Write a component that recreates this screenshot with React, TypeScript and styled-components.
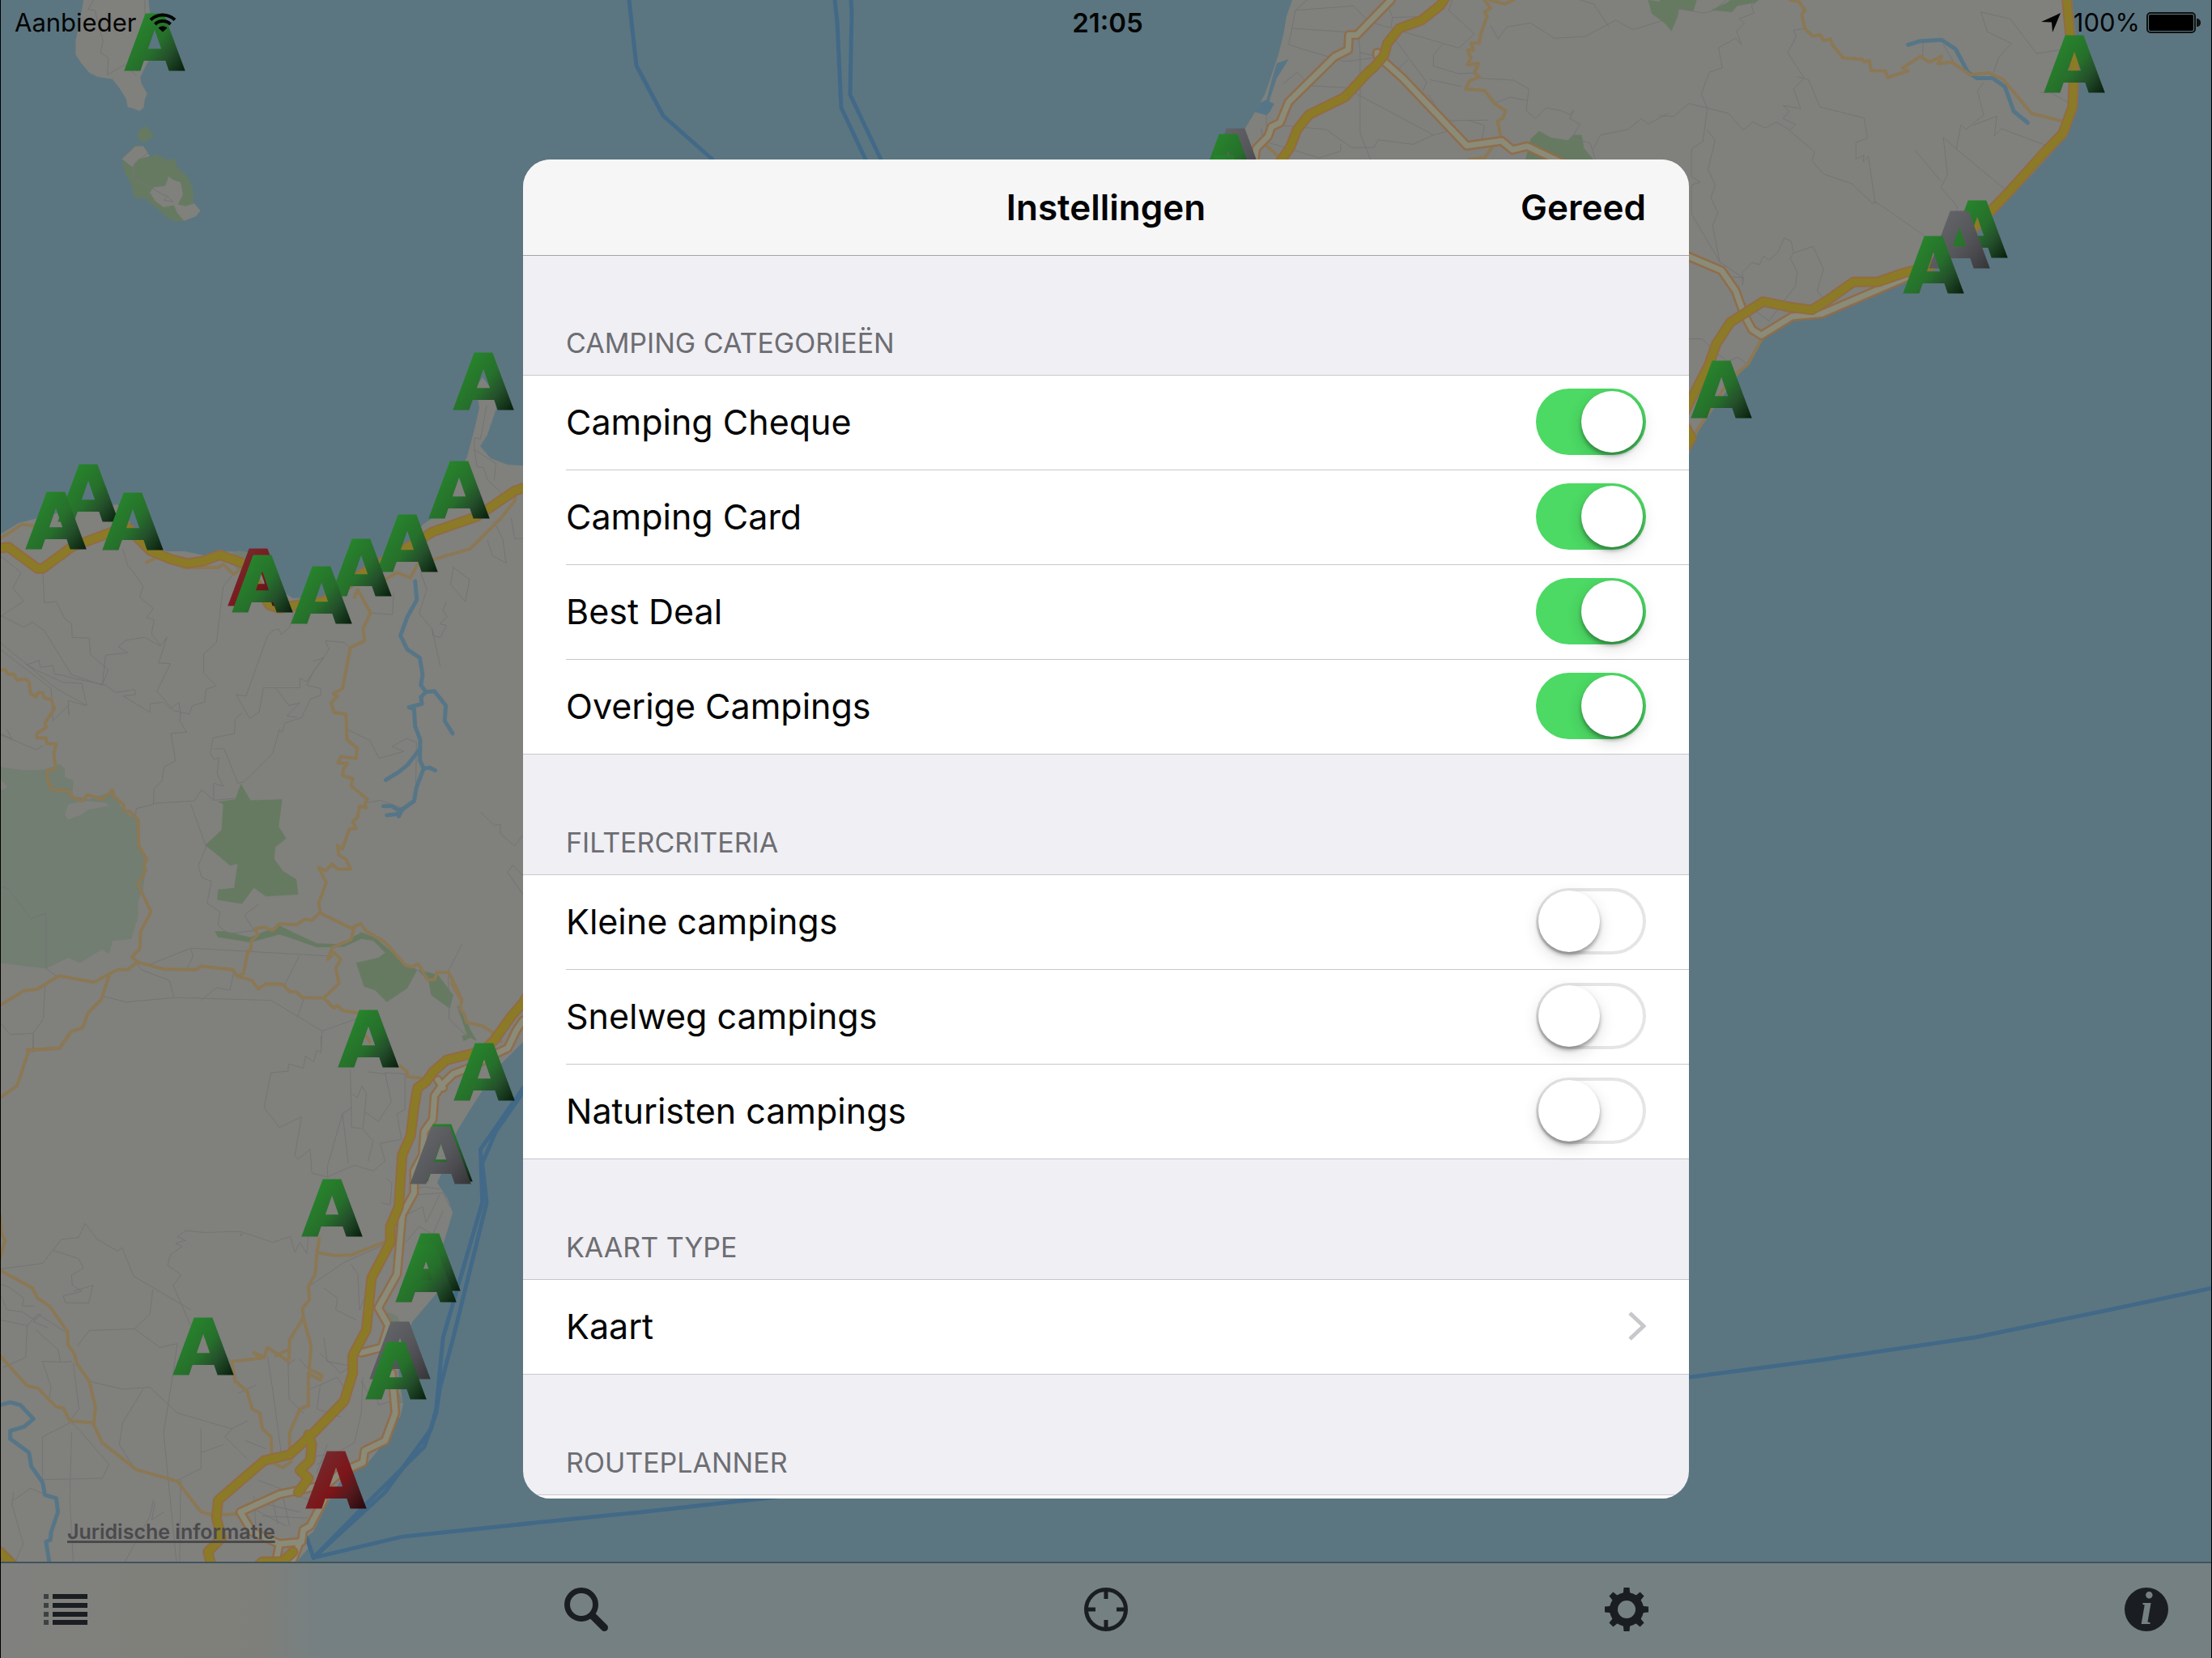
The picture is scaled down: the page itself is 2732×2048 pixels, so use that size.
import React from 'react';
import styled, { createGlobalStyle, css } from 'styled-components';

const GlobalStyle = createGlobalStyle`
  *, *::before, *::after { box-sizing: border-box; }
  html, body { margin: 0; background: #000; }
  body, button, input { font-family: Inter, "Liberation Sans", sans-serif; }
`;

/* ---------- shell ---------- */

const Screen = styled.div`
  position: relative;
  display: flex;
  flex-direction: column;
  height: 100vh;
  padding: 0 1px;
  overflow: hidden;
  background: #000;
`;

const MapArea = styled.main`
  position: relative;
  flex: 1;
  min-height: 0;
  background: #5b7681;
`;

const MapSvg = styled.svg`
  display: block;
  width: 100%;
  height: 100%;
`;

const LegalLink = styled.a`
  position: absolute;
  left: 82px;
  bottom: 21px;
  color: #4a4a4d;
  font-size: 25px;
  font-weight: 600;
  line-height: 32px;
  text-decoration: underline;
  text-decoration-thickness: 3px;
  text-underline-offset: 2px;
  text-decoration-skip-ink: none;
`;

/* ---------- status bar ---------- */

const StatusBar = styled.header`
  position: absolute;
  inset: 0 0 auto;
  display: grid;
  grid-template-columns: 1fr auto 1fr;
  align-items: center;
  height: 56px;
  padding: 0 14px 0 18px;
  color: #050505;
  font-size: 31px;
  line-height: 40px;
`;

const StatusGroup = styled.div<{ $end?: boolean }>`
  display: flex;
  align-items: center;
  justify-content: ${(p) => (p.$end ? 'flex-end' : 'flex-start')};
  gap: 16px;
`;

const BatteryLevel = styled.div`
  display: flex;
  align-items: center;
  gap: 8px;
`;

const Clock = styled.time`
  font-size: 33px;
  font-weight: 600;
`;

/* ---------- toolbar ---------- */

const Toolbar = styled.nav`
  display: flex;
  align-items: center;
  justify-content: space-between;
  height: 119px;
  padding: 0 53px 4px;
  border-top: 2px solid #40545e;
  background: linear-gradient(90deg, #80807e 0, #80807a 220px, #7e7f7a 320px, #758083 400px, #758083 100%);
`;

const ToolButton = styled.button`
  display: block;
  width: 54px;
  height: 54px;
  padding: 0;
  border: 0;
  background: none;
  color: #1a1e22;

  svg {
    display: block;
    width: 100%;
    height: 100%;
  }
`;

/* ---------- dialog ---------- */

const Backdrop = styled.div`
  position: absolute;
  inset: 0;
  display: grid;
  place-items: center;
`;

const Dialog = styled.div`
  width: min(1440px, 94vw);
  height: calc(100vh - 394px);
  overflow: hidden;
  border-radius: 34px;
  background: #efeff4;
`;

const NavBar = styled.div`
  position: relative;
  display: grid;
  grid-template-columns: 1fr auto 1fr;
  align-items: center;
  height: 118px;
  padding: 0 53px;
  background: #f6f6f7;
  box-shadow: 0 1px 0 #a5a5a9;
`;

const Title = styled.h1`
  grid-column: 2;
  margin: 0;
  color: #030303;
  font-size: 44px;
  font-weight: 600;
  line-height: 54px;
`;

const DoneButton = styled.button`
  justify-self: end;
  padding: 0;
  border: 0;
  background: none;
  color: #030303;
  font-size: 44px;
  font-weight: 600;
  line-height: 54px;
`;

const SectionTitle = styled.h2`
  display: flex;
  align-items: flex-end;
  height: 148px;
  margin: 0;
  padding: 0 53px 19px;
  color: #6d6d72;
  font-size: 34px;
  font-weight: 400;
  line-height: 40px;
  text-transform: uppercase;
`;

const List = styled.div`
  border-top: 1px solid #c8c7cc;
  border-bottom: 1px solid #c8c7cc;
  background: #fff;
`;

const rowBox = css`
  display: flex;
  align-items: center;
  justify-content: space-between;
  height: 116px;
  padding: 0 53px 2px 0;
  color: #050505;
  font-size: 43px;
  line-height: 54px;
`;

const ToggleRow = styled.label`
  ${rowBox}
  margin-left: 53px;

  & + & {
    height: 117px;
    border-top: 1px solid #c8c7cc;
  }
`;

const LinkRow = styled.button`
  ${rowBox}
  width: 100%;
  padding-left: 53px;
  border: 0;
  background: none;
  text-align: left;
`;

const Switch = styled.input`
  display: flex;
  align-items: center;
  justify-content: flex-start;
  flex: none;
  appearance: none;
  width: 136px;
  height: 82px;
  margin: 0;
  padding: 0 4px 0 3px;
  border-radius: 41px;
  background: #fff;
  box-shadow: inset 0 0 0 4px #e5e5e5;

  &::after {
    content: '';
    width: 76px;
    height: 76px;
    border-radius: 50%;
    background: #fff;
    box-shadow: 0 4px 5px rgba(0, 0, 0, 0.32), 0 7px 20px rgba(0, 0, 0, 0.14);
  }

  &:checked {
    justify-content: flex-end;
    background: #4cd964;
    box-shadow: none;
  }
`;

const Chevron = styled.svg`
  display: block;
  width: 22px;
  height: 36px;
`;

/* ---------- map drawing ---------- */

type LineKind = 'minor' | 'secondary' | 'river' | 'ferry' | 'paleCase' | 'pale' | 'yellowCase' | 'yellow';

const lineStyles: Record<LineKind, [string, number]> = {
  minor: ['#747475', 1],
  secondary: ['#8b7854', 4],
  river: ['#567687', 5],
  ferry: ['#426987', 5],
  paleCase: ['#8f6d4b', 12],
  pale: ['#8a8b78', 7],
  yellowCase: ['#926b43', 13],
  yellow: ['#8b7b26', 9],
};

const MapLine = styled.polyline<{ $kind: LineKind }>`
  fill: none;
  stroke: ${(p) => lineStyles[p.$kind][0]};
  stroke-width: ${(p) => lineStyles[p.$kind][1]}px;
  stroke-linejoin: round;
  stroke-linecap: round;
  vector-effect: non-scaling-stroke;
`;

const areaColors = { land: '#80807d', park: '#667a62', reserve: '#717e71', sea: '#5b7681', water: '#567687' };
type AreaKind = keyof typeof areaColors;

const MapRegion = styled.polygon<{ $kind: AreaKind }>`
  fill: ${(p) => areaColors[p.$kind]};
`;

interface Tile {
  transform?: string;
  areas?: [AreaKind, string][];
  minor?: string[];
  secondary?: string[];
  river?: string[];
  ferry?: string[];
  pale?: string[];
  yellow?: string[];
}

const tiles: Tile[] = [
  {
    areas: [
      ['land', '0,660 23,646 70,634 145,623 164,650 181,672 206,681 228,681 252,686 274,681 307,682 330,720 362,739 400,737 421,730 442,709 476,703 505,674 522,648 540,636 560,600 577,564 587,526 592,504 588,478 596,466 610,485 613,505 606,525 602,537 593,551 606,566 627,574 700,578 700,1240 646,1287 614,1319 581,1370 564,1398 552,1435 540,1461 553,1481 559,1498 551,1525 540,1560 543,1593 509,1633 497,1662 492,1696 498,1735 494,1751 488,1750 476,1780 455,1806 421,1828 404,1858 387,1892 377,1900 381,1912 366,1930 0,1930'],
      ['land', '1596,0 1589,20 1585,43 1579,67 1568,100 1562,117 1549,140 1537,160 1526,187 1522,197 1522,600 2086,560 2098,532 2115,507 2146,464 2161,448 2176,420 2215,396 2254,391 2311,364 2350,345 2381,336 2433,296 2463,264 2511,214 2550,171 2565,132 2568,89 2563,36 2559,0'],
    ],
    ferry: [
      '777,0 786,81 819,143 880,197',
      '1031,0 1034,27 1039,133 1069,197',
      '1051,0 1052,15 1050,117 1088,197',
      '640,1883 790,1868 960,1849',
      '2080,1702 2248,1680 2439,1652 2600,1619 2732,1591',
    ],
  },
  {
    transform: 'scale(.42092)',
    areas: [
      ['land', '245,0 240,30 230,80 222,120 222,160 238,185 262,213 285,225 330,232 350,258 370,290 375,315 390,318 410,326 422,315 425,290 432,275 415,245 412,225 435,180 440,40 436,0'],
      ['sea', '440,130 450,118 470,140 470,145 440,145'],
      ['park', '427,368 452,398 422,420 405,405 405,385'],
      ['park', '397,425 425,432 440,462 462,452 490,470 512,466 520,490 552,520 567,560 567,600 540,650 505,648 455,608 425,582 395,580 385,540 365,505 358,468'],
      ['land', '397,430 420,428 440,458 405,468 388,490 358,466'],
      ['land', '495,518 508,528 530,535 537,570 522,600 545,605 570,597 588,618 575,635 540,648 520,625 510,602 480,608 455,590 440,565 450,550 485,545'],
    ],
    minor: [
      '275,0 258,28 278,30 302,120 295,155 318,170 315,220 365,190 400,222',
      '425,0 425,45',
      '435,448 395,480 388,520 480,572 490,575 482,588 508,592 490,575',
      '1428,1190 1415,1260 1410,1288 1392,1285 1392,1320 1400,1370 1418,1372 1432,1410 1470,1445',
      '1392,1320 1455,1360 1450,1410',
    ],
  },
  {
    transform: 'translate(0 640) scale(.42092)',
    areas: [
      ['sea', '770,215 780,160 850,220'],
      ['reserve', '665,110 700,95 725,100 725,140 695,150'],
      ['reserve', '0,730 70,740 130,738 175,722 190,735 190,760 215,770 212,815 260,825 325,805 365,860 407,890 407,960 430,1000 420,1090 405,1125 405,1170 385,1235 330,1240 320,1280 300,1265 235,1305 200,1290 135,1322 0,1305'],
      ['land', '200,840 250,830 310,835 320,845 260,855 240,870 200,885 190,870'],
      ['land', '0,765 22,788 10,798 0,795'],
      ['park', '707,780 735,828 828,825 818,905 840,940 808,965 805,1000 830,1035 870,1060 875,1105 780,1110 745,1085 710,1132 637,1120 640,1090 687,1085 697,1015 675,1020 640,990 602,960 650,915 655,840 640,832 690,825'],
      ['park', '630,1212 660,1212 735,1230 820,1195 860,1215 930,1248 1000,1250 1060,1215 1100,1230 1140,1265 1195,1310 1225,1325 1195,1380 1135,1420 1100,1385 1068,1375 1045,1305 1110,1290 1130,1275 1095,1240 1060,1235 1010,1258 930,1260 860,1235 820,1222 735,1245 640,1230'],
      ['park', '1225,1325 1285,1340 1330,1400 1320,1440 1265,1400 1258,1360'],
      ['park', '1340,1430 1355,1440 1380,1500 1400,1535 1380,1525 1360,1535 1355,1520 1370,1515'],
    ],
    minor: [
      '0,110 62,160 38,205 70,243 0,290',
      '125,150 130,248 165,245 190,295 210,310 212,350 262,352 265,400 318,445 300,490 210,460 130,330 95,305 70,320 0,285',
      '0,365 80,430 115,460 165,500 255,550 240,485 185,482 115,450 78,430 115,418 118,438 155,432 160,458 180,460 215,470 310,490 340,512 395,503 398,518 362,522 440,570 440,545 480,540 500,560 525,540 530,575',
      '0,385 150,500 155,595 200,550 202,578 200,535 250,550',
      '300,490 310,402 375,395 348,378 370,358 425,350 470,375 490,350 465,425 500,427 460,508 480,530 510,565 555,575 565,550 600,540 605,502 635,492 598,455 598,398 635,365 655,200 680,170',
      '360,90 375,140 400,170 420,200 410,232 450,265 430,292 452,298 445,340 470,372',
      '530,575 527,595 548,628 502,632 515,712 482,730 475,772 452,795 450,840 400,852 398,870',
      '450,837 570,830 592,797 627,828 690,822',
      '710,572 690,590 688,632 625,645 617,690 630,710 642,702 637,750 655,787 627,778 627,828',
      '628,677 658,677 698,778 715,775 800,690 820,620 828,630 835,602 885,585 912,530 942,520 940,500 900,490 920,450 950,410 920,420',
      '800,330 785,345 722,522 693,518 732,587 760,570 773,498 880,498 880,470 900,480 965,385 955,360 1010,365 1025,380',
      '810,500 848,550 880,542 842,580 870,585',
      '800,330 818,325 825,342 850,320 862,275',
      '560,840 605,965 582,1020 592,1055 620,1065 608,1130 645,1155 640,1195 670,1220 745,1210 717,1165 760,1132',
      '440,1310 560,1262 965,1285', '560,1265 567,1285 550,1320', '878,1285 835,1370',
      '302,1403 370,1420 515,1407 795,1415 945,1505 1045,1470', '590,1415 635,1378 675,1385 685,1335', '892,1410 872,1465',
      '400,1305 415,1325 497,1357 510,1405', '132,1372 127,1470 97,1512 97,1568', '0,1480 30,1515 97,1512',
      '0,1080 25,1088 90,1175 135,1160 135,1322 165,1343', '0,635 108,680 125,668', '20,620 35,648 0,632',
      '1235,160 1252,210 1230,280 1268,325 1292,435', '1268,325 1270,345 1292,350 1310,315 1290,310 1312,290 1300,270 1310,245',
      '1330,145 1378,180 1365,245 1322,195 1330,145', '1085,278 1152,283 1155,220', '1022,622 1085,652 1112,705 1185,685 1150,670 1192,647 1222,657 1220,790',
      '1080,835 1115,828 1180,850', '1410,862 1450,902 1468,898 1468,925 1510,962 1535,930', '1355,1252 1315,1330 1318,1470 1370,1520',
      '1535,1050 1505,1018 1490,1040 1535,1105', '1430,65 1445,110 1485,132 1475,60 1450,10', '945,1505 942,1568', '1500,0 1510,60 1535,60',
    ],
    secondary: [
      '0,60 65,18 140,30',
      '430,130 470,110 540,145 640,145 655,135 685,165 720,140',
      '1130,180 1165,160 1205,175 1225,135 1380,90 1470,0 1510,-50 1515,-80',
      '0,445 15,445 25,458 40,458 50,475 75,472 85,480 90,515 105,525 112,512 125,512 130,528 150,532 160,560 132,600 135,615 108,632 108,645 135,645 138,662 165,662 158,690 163,735 138,742 140,770 150,795 205,802 212,820 240,830 258,812 300,825 330,798 335,818 362,840 365,860 380,860 405,885 407,960 430,1000 422,1020 427,1035 405,1075 443,1155 412,1215 410,1265 387,1287 400,1300',
      '0,1430 70,1387 110,1382 172,1343 275,1362 345,1325 375,1325 403,1303 480,1323 575,1325 590,1315 683,1325 697,1345 715,1335 727,1270 735,1270 738,1240 757,1222 748,1205 775,1200 800,1210 820,1190 870,1193 895,1177 915,1180 938,1158 1030,1203 1058,1190 1075,1212 1130,1245 1190,1312 1210,1317 1227,1308 1255,1355 1275,1355 1282,1333 1317,1333 1355,1412 1350,1440 1362,1455 1370,1480 1415,1490 1440,1505 1470,1535',
      '1325,1365 1350,1410', '697,1345 740,1357 757,1382 780,1367 830,1368 850,1390 870,1390 887,1407 950,1408 980,1438 990,1430 1005,1445 1050,1452',
      '950,1408 995,1365 985,1320 1000,1295 980,1275 962,1295 975,1260 1030,1237 1038,1205',
      '940,1155 935,1130 957,1070 935,1025 955,1035 975,1015 990,1030 1028,1030 1015,1000 995,990 990,960 1005,970 1025,912 1045,910 1035,890 1048,880 1055,845 1075,850 1070,840 1078,825 1030,785 1035,765 1005,755 1008,735 1020,720 992,718 1000,700 1045,705 1048,675 1018,650 1015,575 980,570 972,542 990,522 978,515 1005,500 1028,380 1070,360 1065,325 1087,278 1050,210 1040,232',
      '320,1343 297,1413 258,1452 243,1495 208,1507 175,1555 80,1560',
    ],
    river: [
      '1218,185 1223,240 1195,290 1175,345 1195,385 1232,410 1240,460 1235,490 1250,510 1275,508 1308,550 1305,595 1328,632',
      '1250,510 1235,525 1238,545 1200,555 1215,560 1218,610 1233,650 1232,710 1243,735 1222,790 1215,830 1180,855 1170,875',
      '1230,680 1195,725 1170,745 1132,768', '1243,735 1260,732 1277,740', '1125,845 1150,845 1165,855 1180,855', '1135,872 1170,868',
    ],
    yellow: [
      '0,88 25,85 110,148 125,148 210,85 330,40 375,28 440,95 500,120 550,133 600,125 645,108 720,135 790,255 820,265 870,255 950,245 1060,165 1190,90 1270,40 1400,-5 1510,-80 1600,-110',
    ],
  },
  {
    transform: 'translate(0 1280) scale(.42092 .4898)',
    areas: [
      ['reserve', '1135,695 1165,705 1175,725 1150,725'],
      ['reserve', '1160,900 1172,900 1182,925 1165,925'],
    ],
    minor: [
      '942,0 942,42 930,35 920,65 897,50 890,80 847,70 845,88 795,92 775,180 820,230 885,203 865,300 875,310 910,285 915,345 960,355 1040,325 1095,340 1130,315',
      '1028,85 1032,230 1060,232', '1032,145 1048,155 1062,125 1075,145 1065,235 1095,265 1080,315', '1005,195 1032,180', '1005,195 1022,320', '1005,195 960,330 962,355',
      '1070,190 1110,215 1148,165 1130,92 1188,95 1188,185 1165,195 1178,260 1115,270 1130,315', '1080,90 1130,95',
      '1120,420 1145,425 1150,370 1135,360', '1200,385 1245,380 1290,385', '1220,400 1300,395 1320,430', '1180,455 1240,430 1250,470 1290,400', '1190,520 1230,480 1270,500 1300,440',
      '935,510 935,545', '545,490 600,495 670,493 710,493 705,505 715,495 800,520 852,505 865,545 880,520 900,548 905,500',
      '545,490 520,505 545,515 515,522 535,530 500,550 492,578 532,602 508,628 560,730 680,820',
      '0,587 125,573 180,512 230,508 250,472 285,512 345,542 358,533 392,605 560,690', '155,540 230,560 245,585 210,602 212,628 240,643 185,655 192,672 260,673 273,628 215,643',
      '448,640 440,700 395,738 262,742 228,780', '395,738 470,785 520,775 508,850 480,1000 518,1328', '0,650 20,690 65,695 100,715 120,700 98,720 140,735', '0,625 25,632 70,660 65,680 100,680',
      '0,715 80,730 110,700 190,745', '125,820 185,822 210,820', '105,740 170,790 178,822', '125,820 150,885 145,910', '80,730 75,810 10,835', '215,825 232,940 205,970',
      '210,1000 205,1170 215,1328', '205,970 240,1000 320,1080 300,1115 125,1118', '125,1010 205,975', '125,1010 125,1118',
      '260,870 360,890 440,885 520,950 680,990 725,970', '360,975 350,1030 395,1090', '420,890 360,975', '590,990 590,1090 520,1120', '590,1050 655,1030', '680,990 660,1010 725,1065',
      '785,810 800,890 825,1050', '750,880 700,900', '845,810 848,915 890,950', '865,815 845,830', '880,815 905,840',
      '905,632 1010,570 1130,525', '950,635 990,660 985,690 1045,715', '1030,575 1050,600 1055,690 1090,620', '950,760 960,820 1020,830', '940,800 1000,850 1045,820', '910,890 990,860 1020,900', '940,880 930,940 1000,960', '1065,860 1060,950 1040,1025 930,1080',
      '760,1120 910,1170', '780,1180 880,1200', '770,1210 900,1215', '800,1170 815,1230', '830,1160 850,1235', '745,1160 750,1230', '740,1190 840,1235', '920,1060 1000,1050', '930,1100 960,1030',
      '530,1120 527,1328', '450,1170 440,1210 365,1328', '455,1175 445,1220 480,1200', '40,1150 35,1180 68,1280 45,1325', '40,1170 90,1140 130,1155',
      '98,0 98,30', '1150,850 1080,900 1060,870', '1100,870 1110,930 1150,920', '720,1020 780,1040',
    ],
    secondary: [
      '200,0 175,30 85,35 50,125 0,155', '0,450 5,500 15,515 0,560',
      '0,590 95,635 110,660 145,680 198,745 200,780 218,800 225,825 262,870 280,935 275,980 300,1025 400,1093 520,1122 590,1200 625,1207 700,1205',
      '0,805 80,882 110,887 165,935 185,937 205,970 270,975',
      '937,510 930,545 980,553 1030,552 1140,515', '930,545 925,600 905,630 908,665 888,685 890,710 850,765 847,820 785,785 775,810 745,798 765,812 680,820 690,870 725,895 740,940 762,950 770,990 795,1010 797,1050',
      '847,790 810,805', '890,710 913,780 907,840 945,855 940,867 905,850 905,932 880,940 850,1000 850,1050', '1175,75 1195,90 1195,102 1235,105', '1075,0 1085,15', '800,1075 830,1088 855,1072',
    ],
    river: ['0,930 30,923 60,930 98,965 70,985 30,995 30,1015 85,1050 92,1085 125,1125 132,1157 165,1165 170,1200 150,1250 148,1270 135,1275 145,1328'],
    ferry: [
      '1560,100 1410,285 1415,420 1300,760 1280,940 1265,990 1130,1150 920,1315',
      '1560,110 1455,240 1415,320 1428,420 1330,760 1290,890 1280,950 1245,1035 1080,1175 920,1315 900,1265',
      '920,1315 1180,1262 1560,1228',
    ],
    pale: [
      '1535,-40 1515,-15 1490,30 1440,50 1390,75 1330,95 1300,120 1275,150 1270,210 1245,240 1240,300 1215,340 1215,395 1180,450 1165,600 1110,685 1140,730 1120,785 1060,798',
      '1285,110 1300,130', '1150,850 1160,950 1130,1020 1070,1045 1065,1075 1000,1100 960,1130 820,1155 705,1200 740,1250 820,1280 885,1275 890,1245 910,1235 950,1170', '820,1280 810,1325', '880,1275 860,1320',
    ],
    yellow: [
      '1560,-120 1535,-85 1500,-50 1450,10 1420,35 1380,45 1310,60 1270,90 1250,115 1225,130 1215,180 1205,250 1180,300 1170,430 1145,480 1145,520 1090,610 1075,740 1035,805 1035,850 1010,920 920,1000 850,1055 775,1070 640,1170 635,1215 650,1265 610,1300 620,1335',
      '905,1005 915,1030 910,1070 880,1095 905,1115 875,1150', '750,1340 770,1325 830,1325 860,1300', '0,1300 40,1335',
    ],
  },
  {
    transform: 'translate(1400 0) scale(.42092 .33333)',
    areas: [
      ['water', '455,220 420,235 405,300 390,370 372,380 355,415 390,427 400,415 413,385 398,375 420,290 445,240'],
      ['park', '1165,515 1190,485 1225,510 1275,520 1290,500 1315,500 1322,550 1350,592 1150,592'],
      ['park', '1510,0 1568,10 1568,95 1520,50'],
    ],
    minor: [
      '510,0 475,38 645,22 690,80 955,178 1000,125 925,38 935,0', '475,38 465,105 620,118', '465,105 455,165 490,180 620,228 700,215', '660,130 665,195 665,495 695,590', '665,195 720,210', '740,0 760,65 830,62', '760,65 755,100',
      '770,150 860,305 850,335', '805,220 770,265', '480,268 520,318 620,325 880,500 940,480', '480,268 440,310', '905,165 880,205 880,245 955,273 1010,270', '870,295 960,320', '1015,290 1115,297 1160,330 1152,410 1180,440 1210,400 1255,410 1280,425 1292,408 1280,440 1310,460 1285,515 1340,530 1355,590', '1350,550 1370,500 1450,480 1490,440 1510,460 1568,420',
      '1048,95 1070,145 1095,100 1165,85 1235,142 1325,135 1415,75 1465,110 1568,70', '1310,0 1350,15 1395,100', '1152,372 1105,360 1065,380', '925,447 1040,445', '980,445 1030,465 1022,520', '440,465 565,480 640,547 705,547 718,518 820,535 880,500', '390,425 390,520', '400,530 545,585 608,560 608,535', '865,350 905,430', '375,475 378,500',
    ],
    secondary: [
      '1030,0 1048,30 1030,45 1038,60 1030,85 1018,130 1015,160 990,160 998,185 980,185 990,215 980,240 1012,235 1000,270 1015,285 985,300 975,330 1030,335 1060,385 1092,410 1085,435 1068,450 1080,520',
      '1045,0 1090,15 1115,0', '390,540 425,580', '1050,550 1030,585 985,590',
    ],
    pale: ['755,0 655,130 632,130 630,185 590,210 455,378 430,455 405,470 395,505 360,550 355,600', '715,195 715,205 790,290 978,540 1080,522 1112,555 1155,542 1260,605'],
    yellow: ['915,-10 900,20 845,75 780,105 745,160 735,205 705,250 690,265 620,360 515,425 480,480 460,545 430,600'],
  },
  {
    transform: 'translate(2050 0) scale(.43495 .35714)',
    areas: [
      ['park', '0,0 60,0 50,60 33,108 0,60'], ['park', '60,0 105,0 95,40 50,30'], ['park', '145,35 190,10 200,0 280,0 270,10 220,20 205,42'],
    ],
    minor: [
      '50,30 125,45 150,38 190,0', '280,0 260,20 268,45 225,65 240,80 218,108 232,155 215,132 167,165 177,235 140,250 118,325 135,375 122,490 90,515 90,610 115,630 90,640 90,740 170,905',
      '0,400 40,403 82,358 195,392 237,450 265,422 300,443 330,422 370,450', '135,450 157,485 137,585 157,640 145,685 165,735 150,780 170,905 235,960',
      '405,100 380,105 388,125 363,182 410,270 380,308 400,375 350,365 368,385 350,410 385,430 368,452 440,525 432,555 465,602 545,635 605,705 610,695 755,818',
      '390,265 422,275 455,370 580,408 590,478 557,492 557,550 580,537 577,560 592,540 612,705',
      '912,42 995,65 1070,185 1150,170', '912,42 930,110 998,150 962,200 948,250', '920,285 902,315 920,398 870,447 855,432 842,515 985,660', '890,433 957,402 950,470 970,445 1095,502',
      '725,520 797,625', '842,515 805,475 817,605 798,648 843,712 845,740', '747,145 747,200', '805,155 835,215', '1080,320 1110,320 1160,355',
      '83,1172 120,1172 165,1225 195,1250 220,1235 245,1255', '205,958 238,960 235,985', '235,985 235,942 262,908 283,915 295,885 310,900 335,873 353,823 373,835 380,875 435,852 465,930 447,1005 465,1035', '380,875 370,892 390,940 385,990 310,1110 205,1015 230,1090',
    ],
    secondary: [
      '370,0 395,5 412,35 403,50 412,100 435,125 455,120 465,140 485,135 490,155 520,200 575,205 580,215 595,208 600,245 640,245 648,268 705,245 690,235 740,195 765,215 800,195 790,220 830,215 880,258 935,252 975,275 1055,392 1140,418',
      '288,1175 250,1260 200,1310 100,1500',
    ],
    river: ['705,155 740,142 800,138 840,170 875,250 900,270 945,270 980,300 1005,385 1045,425'],
    pale: ['60,870 83,888 175,935 215,1005 240,1090 262,1140 288,1160 375,1095 460,1085 700,960'],
    yellow: ['1155,-10 1165,120 1178,200 1172,370 1145,460 1090,530 990,665 900,780 770,920 690,945 620,975 550,975 480,1035 432,1072 370,1062 293,1043 200,1115 160,1190 140,1260 60,1450', '75,1480 90,1515 75,1545'],
  },
];

function MapTile({ tile }: { tile: Tile }) {
  const lines = (kind: LineKind, list?: string[]) =>
    list?.map((points, i) => <MapLine key={kind + i} $kind={kind} points={points} />);
  return (
    <g transform={tile.transform}>
      {tile.areas?.map(([kind, points], i) => (
        <MapRegion key={i} $kind={kind} points={points} />
      ))}
      {lines('minor', tile.minor)}
      {lines('river', tile.river)}
      {lines('ferry', tile.ferry)}
      {lines('secondary', tile.secondary)}
      {lines('paleCase', tile.pale)}
      {lines('pale', tile.pale)}
      {lines('yellowCase', tile.yellow)}
      {lines('yellow', tile.yellow)}
    </g>
  );
}

type PinTone = 'green' | 'red' | 'gray';

const Pin = styled.text<{ $tone: PinTone }>`
  fill: url(#pin-${(p) => p.$tone});
  stroke: url(#pin-${(p) => p.$tone});
  stroke-width: 2px;
  font-family: "DejaVu Sans", sans-serif;
  font-size: 95px;
  font-weight: 700;
  text-anchor: middle;
`;

const pins: [number, number, PinTone][] = [
  [191, 87, 'green'], [597, 506, 'green'], [567, 640, 'green'], [109, 644, 'green'], [69, 678, 'green'],
  [164, 679, 'green'], [319, 748, 'red'], [324, 756, 'green'], [503, 706, 'green'], [446, 736, 'green'],
  [397, 770, 'green'], [455, 1318, 'green'], [598, 1359, 'green'], [546, 1459, 'green'], [544, 1462, 'gray'],
  [410, 1527, 'green'], [531, 1594, 'green'], [526, 1608, 'green'], [494, 1703, 'gray'], [489, 1728, 'green'],
  [251, 1698, 'green'], [415, 1863, 'red'], [1526, 229, 'gray'], [1517, 236, 'green'], [1512, 262, 'green'],
  [2562, 114, 'green'], [2442, 318, 'green'], [2420, 331, 'gray'], [2388, 362, 'green'], [2126, 516, 'green'],
];

const pinTones: Record<PinTone, [string, string, string, string]> = {
  green: ['#27842c', '#266f2b', '#244f2b', '#071d0b'],
  red: ['#74292c', '#7d1519', '#541a1e', '#24080b'],
  gray: ['#626367', '#56575b', '#4b4b4f', '#343437'],
};

function CampingMap() {
  return (
    <MapSvg viewBox="1 0 2730 1929" preserveAspectRatio="xMidYMid slice" aria-hidden="true">
      <defs>
        {(Object.keys(pinTones) as PinTone[]).map((tone) => (
          <linearGradient key={tone} id={`pin-${tone}`} x1="0.3" y1="0.2" x2="0.9" y2="0.9">
            {pinTones[tone].map((color, i) => (
              <stop key={i} offset={[0, 0.42, 0.66, 1][i]} stopColor={color} />
            ))}
          </linearGradient>
        ))}
      </defs>
      {tiles.map((tile, i) => (
        <MapTile key={i} tile={tile} />
      ))}
      {pins.map(([x, y, tone], i) => (
        <Pin key={i} $tone={tone} x={x} y={y}>A</Pin>
      ))}
    </MapSvg>
  );
}

/* ---------- icons ---------- */

const WifiIcon = () => (
  <svg width="34" height="24" viewBox="0 0 34 24" fill="none" stroke="currentColor" strokeWidth="4">
    <path d="M2 8.500a21.500 21.500 0 0 1 30 0" />
    <path d="M7.500 14a13.500 13.500 0 0 1 19 0" />
    <path d="M17 23.500l-5.500-5a8 8 0 0 1 11 0z" fill="currentColor" stroke="none" />
  </svg>
);

const LocationIcon = () => (
  <svg width="24" height="24" viewBox="0 0 24 24" fill="currentColor">
    <path d="M24 0L14 24l-1-12.500L0 11z" />
  </svg>
);

const BatteryIcon = () => (
  <svg width="67" height="26" viewBox="0 0 67 26">
    <rect x="1" y="1" width="59" height="24" rx="4" fill="none" stroke="#111" strokeWidth="2" />
    <rect x="3" y="3" width="55" height="20" rx="2" fill="#000" />
    <path d="M62 8c3 0 5 2 5 5s-2 5-5 5z" fill="#111" />
  </svg>
);

const ListIcon = () => (
  <svg viewBox="0 0 54 54">
    {[8, 19, 30, 40].map((y) => (
      <g key={y}>
        <rect x="0" y={y} width="6" height="6" fill="#3c4142" />
        <rect x="11" y={y} width="43" height="6" fill="currentColor" />
      </g>
    ))}
  </svg>
);

const SearchIcon = () => (
  <svg viewBox="0 0 54 54" fill="none" stroke="currentColor">
    <circle cx="21" cy="21" r="17.500" strokeWidth="7" />
    <path d="M35 35l14.500 14.500" strokeWidth="9" strokeLinecap="round" />
  </svg>
);

const TargetIcon = () => (
  <svg viewBox="0 0 54 54" fill="none" stroke="currentColor" strokeWidth="5">
    <circle cx="27" cy="27" r="24.500" />
    <path d="M27 3v11M27 40v11M3 27h11M40 27h11" />
  </svg>
);

const GearIcon = () => (
  <svg viewBox="0 0 54 54">
    <circle cx="27" cy="27" r="16" fill="none" stroke="currentColor" strokeWidth="10" />
    {[0, 45, 90, 135, 180, 225, 270, 315].map((a) => (
      <path key={a} d="M17 11.500q5-1 6-6l.5-5.500h7l.5 5.500q1 5 6 6z" fill="currentColor" transform={`rotate(${a} 27 27)`} />
    ))}
  </svg>
);

const InfoGlyph = styled.text`
  fill: #758083;
  font-family: "Liberation Serif", serif;
  font-size: 56px;
  font-style: italic;
  font-weight: 700;
  text-anchor: middle;
`;

const InfoIcon = () => (
  <svg viewBox="0 0 54 54" overflow="visible" aria-hidden="true">
    <circle cx="27" cy="27" r="27" fill="currentColor" />
    <InfoGlyph x="27" y="45">i</InfoGlyph>
  </svg>
);

/* ---------- content ---------- */

const toggleSections = [
  {
    title: 'Camping categorieën',
    items: ['Camping Cheque', 'Camping Card', 'Best Deal', 'Overige Campings'],
    on: true,
  },
  {
    title: 'Filtercriteria',
    items: ['Kleine campings', 'Snelweg campings', 'Naturisten campings'],
    on: false,
  },
];

const tools = [
  { label: 'Lijst', Icon: ListIcon },
  { label: 'Zoeken', Icon: SearchIcon },
  { label: 'Mijn locatie', Icon: TargetIcon },
  { label: 'Instellingen', Icon: GearIcon },
  { label: 'Informatie', Icon: InfoIcon },
];

export default function App() {
  return (
    <Screen>
      <GlobalStyle />
      <MapArea>
        <CampingMap />
        <LegalLink href="#juridisch">Juridische informatie</LegalLink>
      </MapArea>
      <Toolbar>
        {tools.map(({ label, Icon }) => (
          <ToolButton key={label} type="button" aria-label={label}>
            <Icon />
          </ToolButton>
        ))}
      </Toolbar>
      <StatusBar>
        <StatusGroup>
          <span>Aanbieder</span>
          <WifiIcon />
        </StatusGroup>
        <Clock>21:05</Clock>
        <StatusGroup $end>
          <LocationIcon />
          <BatteryLevel>
            <span>100%</span>
            <BatteryIcon />
          </BatteryLevel>
        </StatusGroup>
      </StatusBar>
      <Backdrop>
        <Dialog role="dialog" aria-labelledby="settings-title">
          <NavBar>
            <Title id="settings-title">Instellingen</Title>
            <DoneButton type="button">Gereed</DoneButton>
          </NavBar>
          {toggleSections.map((section) => (
            <section key={section.title}>
              <SectionTitle>{section.title}</SectionTitle>
              <List>
                {section.items.map((item) => (
                  <ToggleRow key={item}>
                    {item}
                    <Switch type="checkbox" role="switch" defaultChecked={section.on} />
                  </ToggleRow>
                ))}
              </List>
            </section>
          ))}
          <section>
            <SectionTitle>Kaart type</SectionTitle>
            <List>
              <LinkRow type="button">
                Kaart
                <Chevron viewBox="0 0 22 36" aria-hidden="true">
                  <path d="M2 2l17 16L2 34" fill="none" stroke="#c7c7cc" strokeWidth="5" />
                </Chevron>
              </LinkRow>
            </List>
          </section>
          <section>
            <SectionTitle>Routeplanner</SectionTitle>
            <List>
              <ToggleRow as="div" />
            </List>
          </section>
        </Dialog>
      </Backdrop>
    </Screen>
  );
}
